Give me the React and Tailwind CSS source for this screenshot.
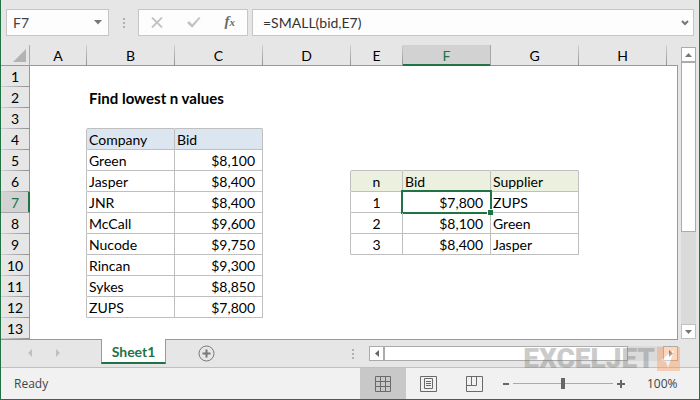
import React, { useState } from 'react';

const columns = ['A', 'B', 'C', 'D', 'E', 'F', 'G', 'H'];

const columnWidths = {
  A: 'w-[57px]',
  B: 'w-[88px]',
  C: 'w-[88px]',
  D: 'w-[88px]',
  E: 'w-[52px]',
  F: 'w-[88px]',
  G: 'w-[88px]',
  H: 'w-[88px]',
};

const rowCount = 13;

const bids = [
  { company: 'Green', bid: 8100 },
  { company: 'Jasper', bid: 8400 },
  { company: 'JNR', bid: 8400 },
  { company: 'McCall', bid: 9600 },
  { company: 'Nucode', bid: 9750 },
  { company: 'Rincan', bid: 9300 },
  { company: 'Sykes', bid: 8850 },
  { company: 'ZUPS', bid: 7800 },
];

const lowest = [
  { n: 1, bid: 7800, supplier: 'ZUPS' },
  { n: 2, bid: 8100, supplier: 'Green' },
  { n: 3, bid: 8400, supplier: 'Jasper' },
];

const formatBid = (value) => `$${value.toLocaleString('en-US')}`;

const buildCells = () => {
  const cells = {
    B2: { text: 'Find lowest n values', className: 'text-[15px] font-bold' },
    B4: { text: 'Company', className: 'text-sm bg-[#dce6f1]' },
    C4: { text: 'Bid', className: 'text-sm bg-[#dce6f1]' },
    E6: { text: 'n', className: 'text-sm bg-[#ebf1de] text-center' },
    F6: { text: 'Bid', className: 'text-sm bg-[#ebf1de]' },
    G6: { text: 'Supplier', className: 'text-sm bg-[#ebf1de]' },
  };
  bids.forEach((item, i) => {
    cells[`B${i + 5}`] = { text: item.company, className: 'text-sm' };
    cells[`C${i + 5}`] = { text: formatBid(item.bid), className: 'text-sm text-right' };
  });
  lowest.forEach((item, i) => {
    cells[`E${i + 7}`] = { text: item.n, className: 'text-sm text-center' };
    cells[`F${i + 7}`] = { text: formatBid(item.bid), className: 'text-sm text-right' };
    cells[`G${i + 7}`] = { text: item.supplier, className: 'text-sm' };
  });
  return cells;
};

const cells = buildCells();

// Ranges that carry visible borders
const inRange = (col, row) =>
  (['B', 'C'].includes(col) && row >= 4 && row <= 12) ||
  (['E', 'F', 'G'].includes(col) && row >= 6 && row <= 9);

const borderClasses = (col, row) => {
  const next = columns[columns.indexOf(col) + 1];
  const right = inRange(col, row) || inRange(next, row);
  const bottom = inRange(col, row) || inRange(col, row + 1);
  return `${right ? 'border-r-[#bfbfbf]' : 'border-r-transparent'} ${bottom ? 'border-b-[#bfbfbf]' : 'border-b-transparent'}`;
};

const Dots = () => (
  <svg width="2" height="10" viewBox="0 0 2 10" fill="#b0b0b0">
    <path d="M0 0h2v2H0zM0 4h2v2H0zM0 8h2v2H0z" />
  </svg>
);

const FormulaBar = ({ formula, onChange }) => (
  <div className="flex h-9 items-end px-[5px]">
    <div className="flex h-[27px] w-[103px] items-center border border-[#c6c6c6] bg-[#fdfdfd] pr-1.5">
      <input
        aria-label="Name box"
        defaultValue="F7"
        className="w-full min-w-0 bg-transparent pl-1.5 text-sm text-[#444] outline-none"
      />
      <button aria-label="Name list">
        <svg width="8" height="5" viewBox="0 0 8 5" fill="#777">
          <path d="M0 0h8L4 4.5z" />
        </svg>
      </button>
    </div>
    <div className="flex h-[27px] w-[29px] items-center justify-center">
      <Dots />
    </div>
    <div className="flex h-[27px] w-[110px] items-center justify-between border border-[#c6c6c6] bg-[#fdfdfd] px-3">
      <button aria-label="Cancel">
        <svg width="12" height="11" viewBox="0 0 12 11" fill="none" stroke="#c3c3c3" strokeWidth="1.8">
          <path d="M1 .5l10 10M11 .5l-10 10" />
        </svg>
      </button>
      <button aria-label="Enter">
        <svg width="14" height="11" viewBox="0 0 14 11" fill="#c3c3c3">
          <path d="M0 6l2-2 3.2 3.2L12 0l1.5 1L5.2 10.8z" />
        </svg>
      </button>
      <button aria-label="Insert function" className="pb-0.5 font-['Liberation_Serif',serif] text-[15px] leading-none font-bold text-[#6a6a6a] italic">
        f<span className="text-[11px]">x</span>
      </button>
    </div>
    <div className="ml-1 flex h-[27px] flex-1 items-center border border-[#c6c6c6] bg-[#fdfdfd] pr-1">
      <input
        aria-label="Formula"
        value={formula}
        onChange={(e) => onChange(e.target.value)}
        className="min-w-0 flex-1 bg-transparent pl-2.5 text-sm text-[#333] outline-none"
      />
      <button aria-label="Expand formula bar">
        <svg width="8" height="6" viewBox="0 0 8 6" fill="none" stroke="#777" strokeWidth="2">
          <path d="M1 1l3 3 3-3" />
        </svg>
      </button>
    </div>
  </div>
);

const ColumnHeader = ({ col, active }) => (
  <th
    scope="col"
    className={`h-[21px] border-r border-b p-0 pt-0.5 text-center text-sm leading-[18px] font-normal ${columnWidths[col]} ${
      active
        ? 'border-r-[#a6a6a6] border-b-[#217346] bg-[#d2d2d2] text-[#217346] shadow-[inset_0_-1px_#217346]'
        : 'border-r-transparent border-b-[#999] bg-[linear-gradient(#d0d0d0,#8f8f8f)] bg-[length:1px_100%] bg-right bg-no-repeat bg-origin-border'
    }`}
  >
    {col}
  </th>
);

const Cell = ({ col, row, active }) => {
  const cell = cells[`${col}${row}`] || { className: '' };
  const aligned = cell.className.includes('text-right') ? 'pr-[7px]' : 'pl-0.5';
  const pad = cell.className.includes('text-center') ? '' : aligned;

  return (
    <td className={`relative h-[21px] border-r border-b p-0 pt-0.5 whitespace-nowrap ${borderClasses(col, row)} ${cell.className}`}>
      <div className={`leading-[18px] ${pad}`}>{cell.text}</div>
      {active && (
        <>
          <div className="absolute -inset-0.5 border-2 border-[#217346]" />
          <div className="absolute -right-[3px] -bottom-[3px] z-10 size-1.5 border-t border-l border-white bg-[#217346]" />
        </>
      )}
    </td>
  );
};

const Sheet = () => (
  <table className="w-full table-fixed border-separate border-spacing-0 bg-white text-black">
    <thead className="bg-[#e6e6e6]">
      <tr>
        <th className="w-[29px] border-r border-b border-r-[#ababab] border-b-[#999] p-0">
          <button aria-label="Select all" className="mr-[3px] ml-auto block">
            <svg width="13" height="13" viewBox="0 0 13 13" fill="#b3b3b3">
              <path d="M13 0v13H0z" />
            </svg>
          </button>
        </th>
        {columns.map((col) => (
          <ColumnHeader key={col} col={col} active={col === 'F'} />
        ))}
        <th className="border-b border-b-[#999] p-0" />
      </tr>
    </thead>
    <tbody>
      {Array.from({ length: rowCount }, (_, i) => i + 1).map((row) => (
        <tr key={row}>
          <th
            scope="row"
            className={`h-[21px] border-r border-b p-0 pt-0.5 text-center text-sm leading-[18px] font-normal ${
              row === 7
                ? 'border-r-[#217346] border-b-[#a6a6a6] bg-[#d2d2d2] text-[#217346] shadow-[inset_-1px_0_#217346]'
                : 'border-r-[#999] border-b-transparent bg-[#e6e6e6] bg-[linear-gradient(90deg,#d0d0d0,#8f8f8f)] bg-[length:100%_1px] bg-bottom bg-no-repeat bg-origin-border'
            }`}
          >
            {row}
          </th>
          {columns.map((col) => (
            <Cell key={col} col={col} row={row} active={col === 'F' && row === 7} />
          ))}
          <td className="border-r border-r-[#999] p-0" />
        </tr>
      ))}
    </tbody>
  </table>
);

const VerticalScroll = () => (
  <div className="flex w-[21px] shrink-0 flex-col items-center bg-[#e6e6e6] pt-0.5">
    <button aria-label="Scroll up" className="flex h-[15px] w-[15px] items-center justify-center border border-[#ababab] bg-white">
      <svg width="7" height="4" viewBox="0 0 7 4" fill="#777"><path d="M0 4h7L3.5 0z" /></svg>
    </button>
    <div className="h-[170px] w-[15px] border border-[#ababab] bg-white" />
    <div className="w-[15px] flex-1 bg-[#dadada]" />
    <button aria-label="Scroll down" className="flex h-[15px] w-[15px] items-center justify-center border border-[#c0c0c0] bg-white">
      <svg width="7" height="4" viewBox="0 0 7 4" fill="#777"><path d="M0 0h7L3.5 4z" /></svg>
    </button>
  </div>
);

const SheetTabs = () => (
  <div className="flex h-[29px] items-start border-b border-b-[#c0c0c0] bg-[#e6e6e6]">
    <div className="flex h-[27px] w-[100px] items-center gap-6 border-t border-t-[#999] pl-[27px]">
      <button aria-label="Previous sheet">
        <svg width="4" height="8" viewBox="0 0 4 8" fill="#bfbfbf"><path d="M4 0v8L0 4z" /></svg>
      </button>
      <button aria-label="Next sheet">
        <svg width="4" height="8" viewBox="0 0 4 8" fill="#bfbfbf"><path d="M0 0v8l4-4z" /></svg>
      </button>
    </div>
    <button className="h-[25px] w-[65px] border-x border-b-2 border-x-[#999] border-b-[#217346] bg-white pt-0.5 text-sm leading-5 font-bold text-[#217346]">
      Sheet1
    </button>
    <div className="flex flex-1 items-start border-t border-t-[#999]">
      <button aria-label="New sheet" className="mt-[5px] ml-8">
        <svg width="17" height="17" viewBox="0 0 17 17" fill="none" stroke="#777">
          <circle cx="8.5" cy="8.5" r="7.5" />
          <path d="M4.5 8.5h8M8.5 4.5v8" strokeWidth="2" />
        </svg>
      </button>
      <div className="ml-auto flex items-center pt-1.5">
        <Dots />
        <div className="ml-[15px] flex h-[15px] w-[309px]">
          <button aria-label="Scroll left" className="flex w-[15px] items-center justify-center border border-[#ababab] bg-white">
            <svg width="4" height="7" viewBox="0 0 4 7" fill="#666"><path d="M4 0v7L0 3.5z" /></svg>
          </button>
          <div className="w-[244px] border border-[#ababab] bg-white" />
          <div className="flex-1 bg-[#dadada]" />
          <button aria-label="Scroll right" className="flex w-[15px] items-center justify-center border border-[#ababab] bg-white">
            <svg width="4" height="7" viewBox="0 0 4 7" fill="#666"><path d="M0 0v7l4-3.5z" /></svg>
          </button>
        </div>
      </div>
    </div>
    <div className="w-[21px]" />
  </div>
);

const StatusBar = ({ zoom }) => (
  <div className="flex h-[31px] items-center bg-[#f1f1f1] text-xs text-[#444]">
    <span className="pl-[13px] font-['Open_Sans',sans-serif]">Ready</span>
    <div className="ml-auto flex h-full">
      <button aria-label="Normal view" className="flex w-[46px] items-center justify-center bg-[#c8c8c8]">
        <svg width="16" height="16" viewBox="0 0 16 16" fill="none" stroke="#6a6a6a">
          <path d="M.5 .5h15v15H.5zM5.5 0v16M10.5 0v16M0 5.5h16M0 10.5h16" />
        </svg>
      </button>
      <button aria-label="Page layout" className="flex w-[45px] items-center justify-center">
        <svg width="17" height="16" viewBox="0 0 17 16" fill="none" stroke="#6a6a6a">
          <path d="M.5 .5h16v15H.5zM4.5 2.5h8v10h-8zM6 5.5h5M6 7.5h5M6 9.5h5" />
        </svg>
      </button>
      <button aria-label="Page break preview" className="flex w-[46px] items-center justify-center">
        <svg width="17" height="16" viewBox="0 0 17 16" fill="none" stroke="#6a6a6a">
          <path d="M.5 .5h16v15H.5zM.5 9.5h10v-9M5.5 0v9.5" />
        </svg>
      </button>
    </div>
    <button aria-label="Zoom out" className="ml-1.5">
      <svg width="6" height="2" viewBox="0 0 6 2"><path d="M0 0h6v2H0z" fill="#666" /></svg>
    </button>
    <input
      type="range"
      aria-label="Zoom"
      min="10"
      max="190"
      defaultValue={zoom}
      className="mx-1 h-3 w-[100px] appearance-none bg-[linear-gradient(#aaa,#aaa)] bg-[length:100%_1px] bg-center bg-no-repeat [&::-webkit-slider-thumb]:h-[11px] [&::-webkit-slider-thumb]:w-1 [&::-webkit-slider-thumb]:appearance-none [&::-webkit-slider-thumb]:bg-[#666]"
    />
    <button aria-label="Zoom in">
      <svg width="8" height="8" viewBox="0 0 8 8"><path d="M3 0h2v3h3v2H5v3H3V5H0V3h3z" fill="#666" /></svg>
    </button>
    <span className="w-[74px] pl-[22px] font-['Open_Sans',sans-serif] leading-4">{zoom}%</span>
  </div>
);

// Brand mark laid over the scroll bar and status bar
const Watermark = () => (
  <div className="pointer-events-none absolute right-[19px] bottom-7 flex items-center gap-0.5 opacity-40">
    <span className="font-[Roboto,sans-serif] text-[28px] leading-6 font-black text-[#808080]">EXCELJET</span>
    <svg width="23" height="24" viewBox="0 0 23 24">
      <path d="M0 0h23v24H0z" fill="#ff9a58" />
      <path d="M17 3L4 13l5 2 2 6z" fill="#fff" />
    </svg>
  </div>
);

const App = () => {
  const [formula, setFormula] = useState('=SMALL(bid,E7)');

  return (
    <div className="relative overflow-hidden border-x border-b border-[#217346] bg-[#e6e6e6] font-[Lato,sans-serif]">
      <FormulaBar formula={formula} onChange={setFormula} />
      <div className="mt-[9px] flex">
        <div className="min-w-0 flex-1">
          <Sheet />
        </div>
        <VerticalScroll />
      </div>
      <SheetTabs />
      <StatusBar zoom={100} />
      <Watermark />
    </div>
  );
};

export default App;
